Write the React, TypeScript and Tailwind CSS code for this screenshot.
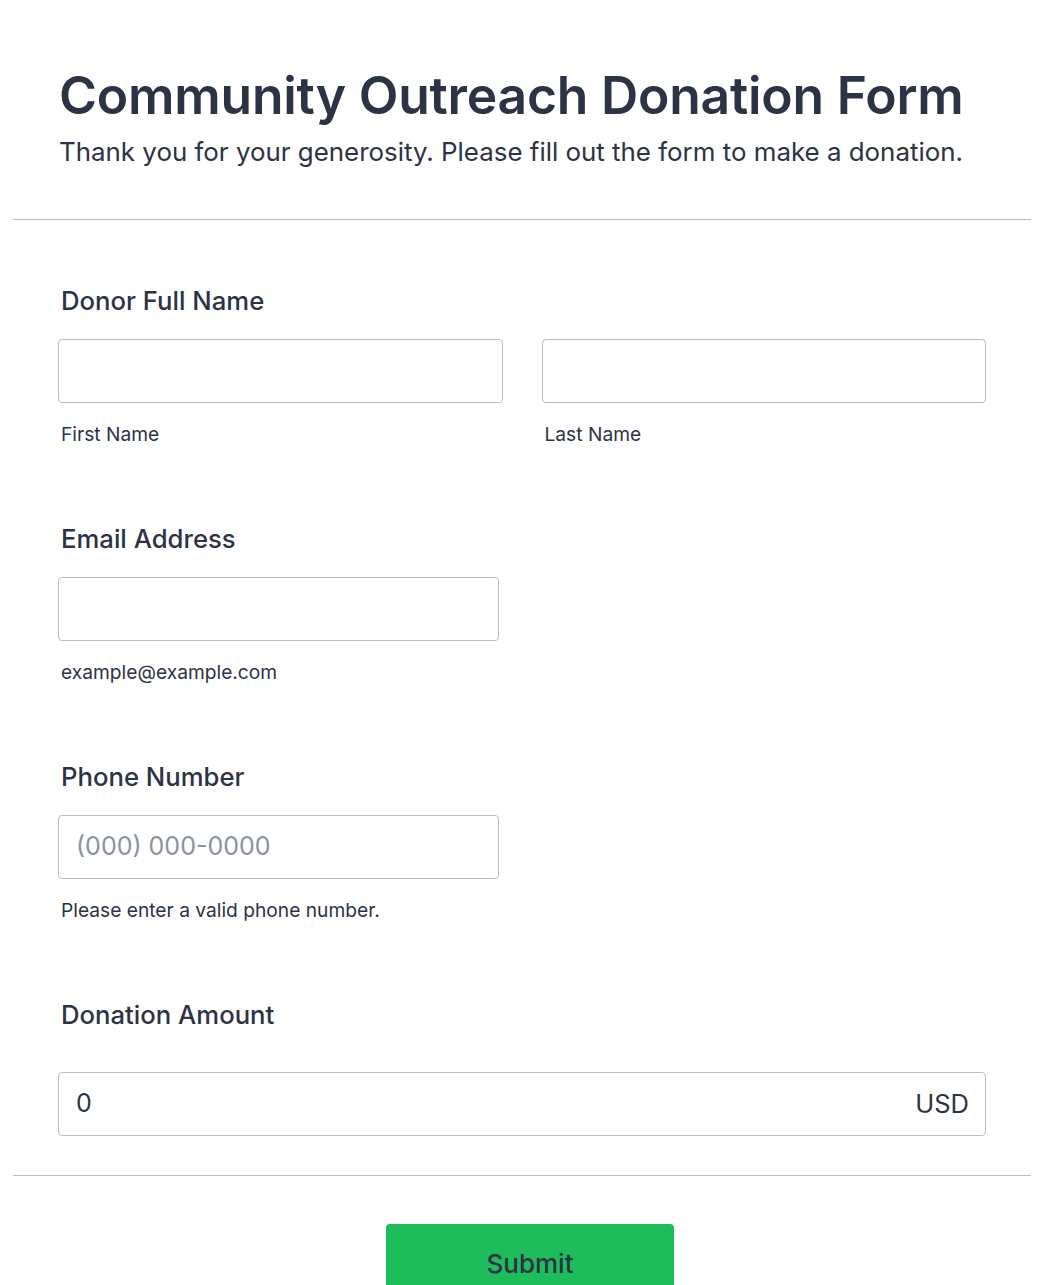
import React from "react";

export default function App() {
  const label = "text-[25.7px] leading-[32px] font-medium text-[#2c3345]";
  const sub = "text-[19.2px] leading-[24px] text-[#2c3345] mt-[19px] pl-[3px]";
  const input = "h-[64px] border border-[#b8bdc9] rounded-[4px] bg-white";
  return (
    <div className="min-h-[1285px] bg-white px-[13px] overflow-hidden" style={{ fontFamily: "Inter, 'Noto Sans', sans-serif" }}>
      <div className="pl-[46px] pr-[45px] pt-[65px] pb-[51px]">
        <h1 className="text-[51.6px] leading-[60px] font-semibold text-[#2c3345] tracking-[-0.2px] whitespace-nowrap">Community Outreach Donation Form</h1>
        <p className="mt-[11px] text-[25.9px] leading-[32px] text-[#2c3345] whitespace-nowrap">Thank you for your generosity. Please fill out the form to make a donation.</p>
      </div>
      <div className="h-px bg-[#b9bcc7]" />
      <div className="pl-[45px] pr-[45px] pt-[65px]">
        <div>
          <div className={label + " pl-[3px]"}>Donor Full Name</div>
          <div className="mt-[22px] flex gap-[39px]">
            <div className="flex-1">
              <div className={input} />
              <div className={sub}>First Name</div>
            </div>
            <div className="flex-1">
              <div className={input} />
              <div className={sub}>Last Name</div>
            </div>
          </div>
        </div>
        <div className="mt-[77px]">
          <div className={label + " pl-[3px]"}>Email Address</div>
          <div className={input + " mt-[22px] w-[441px]"} />
          <div className={sub}>example@example.com</div>
        </div>
        <div className="mt-[77px]">
          <div className={label + " pl-[3px]"}>Phone Number</div>
          <div className={input + " mt-[22px] w-[441px] flex items-center px-[17px]"}>
            <span className="text-[25px] text-[#8a92a1]">(000) 000-0000</span>
          </div>
          <div className={sub}>Please enter a valid phone number.</div>
        </div>
        <div className="mt-[77px]">
          <div className={label + " pl-[3px]"}>Donation Amount</div>
          <div className={input + " h-[63px] mt-[41px] flex items-center justify-between pl-[17px] pr-[16px]"}>
            <span className="text-[25px] text-[#2c3345]">0</span>
            <span className="text-[25.5px] text-[#2c3345]">USD</span>
          </div>
        </div>
      </div>
      <div className="mt-[39px] h-px bg-[#b9bcc7]" />
      <div className="flex justify-center pt-[48px] pl-[16px]">
        <button className="w-[288px] h-[78px] rounded-[4px] bg-[#1cbd5a] text-[26px] font-medium text-[#2c3345]">Submit</button>
      </div>
    </div>
  );
}
